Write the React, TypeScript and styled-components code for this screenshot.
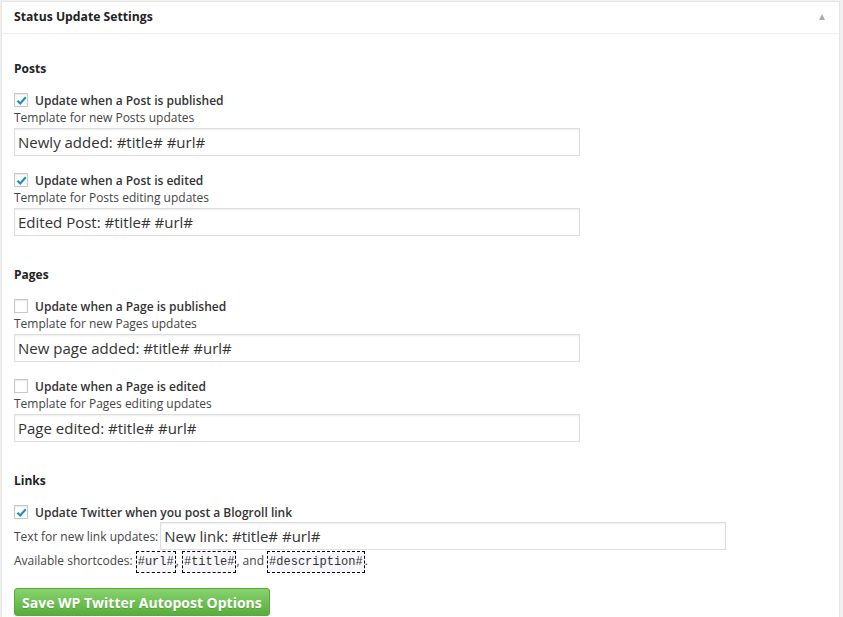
import React from "react";
import styled, { createGlobalStyle } from "styled-components";

const GlobalStyle = createGlobalStyle`
  html, body {
    margin: 0;
    padding: 0;
    background: #f1f1f1;
  }
  body {
    font-family: "Open Sans", "Liberation Sans", sans-serif;
    font-size: 12px;
    color: #444;
  }
`;

const Page = styled.div`
  padding: 1px 3px 0 1px;
  height: 616px;
  overflow: hidden;
`;

const Postbox = styled.div`
  background: #fff;
  border: 1px solid #e5e5e5;
  box-shadow: 0 1px 1px rgba(0, 0, 0, 0.04);
  min-height: 640px;
`;

const Header = styled.div`
  display: flex;
  align-items: center;
  justify-content: space-between;
  box-sizing: border-box;
  height: 32px;
  padding: 0 12px 2px;
  border-bottom: 1px solid #eee;
`;

const Title = styled.h3`
  margin: 0;
  font-size: 12.2px;
  font-weight: 700;
  color: #222;
`;

const Toggle = styled.span`
  width: 0;
  height: 0;
  border-left: 3.5px solid transparent;
  border-right: 3.5px solid transparent;
  border-bottom: 6px solid #aaa;
  margin-right: 2px;
`;

const Body = styled.div`
  padding: 26px 12px 0;
`;

const Section = styled.div<{ $gap?: number }>`
  & + & {
    margin-top: ${p => p.$gap ?? 29}px;
  }
`;

const SectionTitle = styled.div`
  font-weight: 700;
  color: #222;
  line-height: 18px;
  margin-bottom: 13px;
`;

const Option = styled.div`
  & + & {
    margin-top: 15px;
  }
`;

const CheckRow = styled.label`
  display: flex;
  align-items: center;
  height: 18px;
  font-weight: 600;
  color: #333;
`;

const Box = styled.span`
  box-sizing: border-box;
  width: 14px;
  height: 14px;
  border: 1px solid #c8c8c8;
  box-shadow: inset 0 1px 2px rgba(0, 0, 0, 0.1);
  background: #fff;
  margin-right: 7px;
  display: flex;
  align-items: center;
  justify-content: center;
  flex-shrink: 0;
`;

const Hint = styled.div`
  line-height: 18px;
  margin-bottom: 1px;
  color: #444;
`;

const TextInput = styled.input`
  display: block;
  box-sizing: border-box;
  width: 566px;
  height: 28px;
  padding: 0 3px;
  border: 1px solid #ddd;
  box-shadow: inset 0 1px 2px rgba(0, 0, 0, 0.07);
  font-family: "Open Sans", "Liberation Sans", sans-serif;
  font-size: 15px;
  color: #333;
  outline: none;
`;

const InlineRow = styled.div`
  display: flex;
  align-items: center;
  gap: 2px;
  margin-top: 1px;
`;

const Shortcodes = styled.div`
  line-height: 22px;
  color: #444;
`;

const Code = styled.code`
  font-family: "Liberation Mono", "DejaVu Sans Mono", monospace;
  font-size: 12px;
  background: #f7f7fb;
  border: 1px dashed #000;
  padding: 3px 1px;
  color: #333;
`;

const SaveButton = styled.button`
  display: block;
  margin-top: 15px;
  height: 28px;
  padding: 0 7px;
  border: 1px solid #5aa63f;
  border-radius: 3px;
  background: linear-gradient(to bottom, #86d46e, #58ad3b);
  color: #fff;
  font-family: "Open Sans", "Liberation Sans", sans-serif;
  font-size: 14px;
  font-weight: 700;
  text-shadow: 0 1px 0 rgba(0, 0, 0, 0.15);
  cursor: pointer;
`;

const Check = () => (
  <svg width="11" height="11" viewBox="0 0 12 12">
    <path d="M1.5 6.2 L4.6 9.2 L10.6 2.4" fill="none" stroke="#1e8cbe" strokeWidth="2.3" />
  </svg>
);

function Checkbox({ checked, label }: { checked: boolean; label: string }) {
  return (
    <CheckRow>
      <Box>{checked && <Check />}</Box>
      {label}
    </CheckRow>
  );
}

const sections = [
  {
    title: "Posts",
    options: [
      { checked: true, label: "Update when a Post is published", hint: "Template for new Posts updates", value: "Newly added: #title# #url#" },
      { checked: true, label: "Update when a Post is edited", hint: "Template for Posts editing updates", value: "Edited Post: #title# #url#" },
    ],
  },
  {
    title: "Pages",
    options: [
      { checked: false, label: "Update when a Page is published", hint: "Template for new Pages updates", value: "New page added: #title# #url#" },
      { checked: false, label: "Update when a Page is edited", hint: "Template for Pages editing updates", value: "Page edited: #title# #url#" },
    ],
  },
];

export default function App() {
  return (
    <Page>
      <GlobalStyle />
      <Postbox>
        <Header>
          <Title>Status Update Settings</Title>
          <Toggle />
        </Header>
        <Body>
          {sections.map(s => (
            <Section key={s.title}>
              <SectionTitle>{s.title}</SectionTitle>
              {s.options.map(o => (
                <Option key={o.label}>
                  <Checkbox checked={o.checked} label={o.label} />
                  <Hint>{o.hint}</Hint>
                  <TextInput defaultValue={o.value} />
                </Option>
              ))}
            </Section>
          ))}
          <Section $gap={30}>
            <SectionTitle>Links</SectionTitle>
            <Checkbox checked label="Update Twitter when you post a Blogroll link" />
            <InlineRow>
              <span>Text for new link updates:</span>
              <TextInput defaultValue="New link: #title# #url#" />
            </InlineRow>
            <Shortcodes>
              Available shortcodes: <Code>#url#</Code>, <Code>#title#</Code>, and <Code>#description#</Code>.
            </Shortcodes>
            <SaveButton>Save WP Twitter Autopost Options</SaveButton>
          </Section>
        </Body>
      </Postbox>
    </Page>
  );
}
